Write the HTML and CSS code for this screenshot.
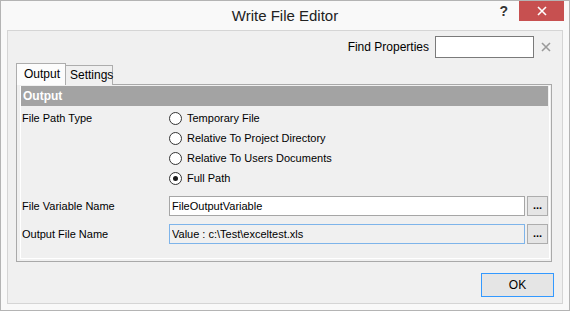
FILE: index.html
```html
<!DOCTYPE html>
<html lang="en">
<head>
  <meta charset="UTF-8">
  <title>Write File Editor</title>
  <link rel="stylesheet" href="styles.css">
</head>
<body>
  <div class="window">
    <div class="titlebar">
      <span></span>
      <div class="title">Write File Editor</div>
      <div class="controls">
        <span class="help">?</span>
        <span class="close">
          <svg width="10" height="10" viewBox="0 0 10 10"><path d="M1 1 L9 9 M9 1 L1 9" stroke="#fff" stroke-width="1.6"/></svg>
        </span>
      </div>
    </div>

    <div class="panel">
      <div class="find-row">
        <label for="find">Find Properties</label>
        <input type="text" id="find" class="find-input">
        <span class="find-clear">
          <svg width="10" height="10" viewBox="0 0 10 10"><path d="M1 1 L9 9 M9 1 L1 9" stroke="#9a9a9a" stroke-width="1.6"/></svg>
        </span>
      </div>

      <div class="tabs">
        <div class="tab active">Output</div>
        <div class="tab">Settings</div>
      </div>

      <div class="tab-page">
        <div class="grid">
          <div class="section-header">Output</div>

          <!-- File path type -->
          <div class="prop-row path-row">
            <div class="prop-label">File Path Type</div>
            <div class="radio-list">
              <div class="radio"><span class="radio-dot"></span>Temporary File</div>
              <div class="radio"><span class="radio-dot"></span>Relative To Project Directory</div>
              <div class="radio"><span class="radio-dot"></span>Relative To Users Documents</div>
              <div class="radio"><span class="radio-dot checked"></span>Full Path</div>
            </div>
          </div>

          <div class="prop-row">
            <div class="prop-label">File Variable Name</div>
            <div class="prop-value">
              <input type="text" class="text-input" value="FileOutputVariable">
              <button class="browse">...</button>
            </div>
          </div>

          <div class="prop-row">
            <div class="prop-label">Output File Name</div>
            <div class="prop-value">
              <input type="text" class="text-input focused" value="Value : c:\Test\exceltest.xls">
              <button class="browse">...</button>
            </div>
          </div>
        </div>
      </div>

      <div class="actions">
        <button class="ok">OK</button>
      </div>
    </div>
  </div>
</body>
</html>
```

FILE: styles.css
```css
* {
  box-sizing: border-box;
}

body {
  margin: 0;
  font-family: 'Liberation Sans', Arial, sans-serif;
  font-size: 11px;
  color: #000;
  background: #fff;
}

.window {
  width: 570px;
  height: 311px;
  border: 1px solid #b4b4b4;
  background: #f9f9f9;
}

.titlebar {
  height: 29px;
  display: grid;
  grid-template-columns: 1fr auto 1fr;
}

.title {
  font-size: 15px;
  color: #222;
  line-height: 29px;
}

.controls {
  justify-self: end;
  display: flex;
  align-items: flex-start;
  margin-right: 5px;
}

.help {
  font-weight: bold;
  font-size: 14px;
  color: #333;
  line-height: 20px;
  margin-right: 11px;
}

.close {
  width: 45px;
  height: 20px;
  background: #c75050;
  display: flex;
  align-items: center;
  justify-content: center;
}

.panel {
  margin: 0 6px;
  height: 274px;
  border: 1px solid #d5d5d5;
  background: #f0f0f0;
  padding: 0 0 6px;
}

.find-row {
  display: flex;
  justify-content: flex-end;
  align-items: center;
  margin-top: 5px;
  padding-right: 10px;
}

.find-row label {
  font-size: 12px;
  margin-right: 6px;
}

.find-input {
  width: 99px;
  height: 22px;
  border: 1px solid #7a7a7a;
  background: #fff;
  outline: none;
}

.find-clear {
  width: 12px;
  margin-left: 6px;
  display: flex;
  justify-content: center;
}

.tabs {
  display: flex;
  align-items: flex-end;
  margin: 5px 0 0 8px;
  height: 22px;
  position: relative;
  z-index: 1;
}

.tab {
  height: 20px;
  padding: 0 4px;
  border: 1px solid #adadad;
  border-bottom: none;
  background: #f0f0f0;
  line-height: 19px;
  font-size: 12px;
}

.tab.active {
  height: 22px;
  width: 50px;
  padding-left: 7px;
  background: #fcfcfc;
  line-height: 21px;
}

.tab + .tab {
  margin-left: -1px;
  width: 48px;
}

.tab-page {
  margin: -1px 10px 0 8px;
  height: 178px;
  border: 1px solid #a9a9a9;
  padding: 1px 1px 2px 3px;
}

.grid {
  height: 100%;
  border: 1px solid #fff;
  border-top: none;
  padding-right: 1px;
}

.section-header {
  height: 20px;
  background: #a3a3a3;
  color: #fff;
  font-weight: bold;
  font-size: 12px;
  line-height: 20px;
  padding-left: 2px;
}

.prop-row {
  display: grid;
  grid-template-columns: 148px 1fr;
  align-items: center;
  margin-top: 8px;
}

.path-row {
  align-items: start;
  margin-top: 2px;
}

.prop-label {
  padding-left: 1px;
  line-height: 20px;
}

.radio-list {
  display: flex;
  flex-direction: column;
}

.radio {
  display: flex;
  align-items: center;
  height: 20px;
}

.radio-dot {
  width: 13px;
  height: 13px;
  border: 1px solid #333;
  border-radius: 50%;
  background: #fff;
  margin-right: 5px;
  display: flex;
  align-items: center;
  justify-content: center;
}

.radio-dot.checked::after {
  content: '';
  width: 5px;
  height: 5px;
  border-radius: 50%;
  background: #1a1a1a;
}

.prop-value {
  display: flex;
  align-items: center;
}

.text-input {
  flex: 1;
  height: 20px;
  border: 1px solid #a6a6a6;
  background: #fff;
  font-family: inherit;
  font-size: 11px;
  padding: 0 2px;
  outline: none;
}

.text-input.focused {
  border-color: #7eb4ea;
  background: #f0f0f0;
}

.browse {
  width: 21px;
  height: 20px;
  margin-left: 2px;
  border: 1px solid #adadad;
  background: #e5e5e5;
  font-family: inherit;
  font-weight: bold;
  font-size: 11px;
  padding: 0 0 4px;
  line-height: 1;
  display: flex;
  align-items: flex-end;
  justify-content: center;
}

.actions {
  display: flex;
  justify-content: flex-end;
  margin-top: 11px;
  padding-right: 8px;
}

.ok {
  width: 73px;
  height: 24px;
  border: 1px solid #3399ff;
  background: #e5e5e5;
  font-family: inherit;
  font-size: 12px;
  color: #000;
}
```
